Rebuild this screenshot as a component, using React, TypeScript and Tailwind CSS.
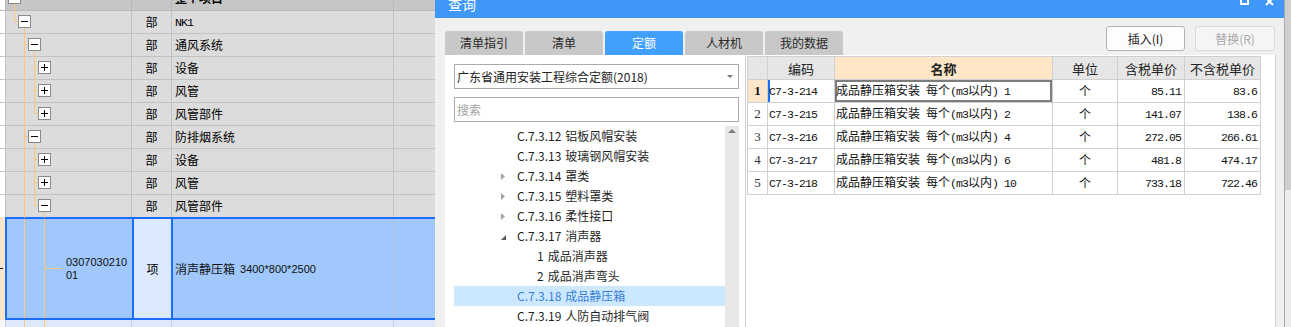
import React from "react";

const TL = "bg-[#fdc67c]";

type VKind = "full" | "upper" | "below";
const VX: Record<number, string> = { 8: "left-[8px]", 18: "left-[18px]", 28: "left-[28px]", 38: "left-[38px]" };
const VK: Record<VKind, string> = {
  full: "top-0 bottom-[-1px]",
  upper: "top-0 h-[11px]",
  below: "top-[17px] bottom-[-1px]",
};
const BX: Record<number, string> = { 12: "left-[12px]", 22: "left-[22px]", 32: "left-[32px]" };
const HX: Record<number, string> = { 12: "left-[8px]", 22: "left-[18px]", 32: "left-[28px]" };

function Sim({ text, bold }: { text: string; bold?: boolean }) {
  const parts = text.match(/[\x20-\x7e]+|[^\x20-\x7e]+/g) ?? [];
  return (
    <span className={`whitespace-pre leading-[14px] ${bold ? "font-bold" : ""}`}>
      {parts.map((p, i) =>
        /^[\x20-\x7e]/.test(p) ? (
          <span key={i} className="font-['Liberation_Mono',monospace] text-[11.5px] tracking-[-0.9px]">
            {p}
          </span>
        ) : (
          <span key={i} className="font-['Noto_Sans_CJK_SC',sans-serif] text-[12px]">
            {p}
          </span>
        )
      )}
    </span>
  );
}

function Box({ minus, cls }: { minus?: boolean; cls: string }) {
  return (
    <div className={`absolute w-[13px] h-[13px] border border-[#8a8a8a] bg-white ${cls}`}>
      <div className="absolute left-[2px] top-[5px] w-[7px] h-px bg-black" />
      {!minus && <div className="absolute left-[5px] top-[2px] w-px h-[7px] bg-black" />}
    </div>
  );
}

type RowSpec = { name: string; v: [number, VKind][]; box: [number, "plus" | "minus"]; last?: boolean };

const ROWS: RowSpec[] = [
  { name: "NK1", v: [[8, "upper"], [18, "below"]], box: [12, "minus"] },
  { name: "通风系统", v: [[18, "full"], [28, "below"]], box: [22, "minus"] },
  { name: "设备", v: [[18, "full"], [28, "full"]], box: [32, "plus"] },
  { name: "风管", v: [[18, "full"], [28, "full"]], box: [32, "plus"] },
  { name: "风管部件", v: [[18, "full"], [28, "upper"]], box: [32, "plus"] },
  { name: "防排烟系统", v: [[18, "full"], [28, "below"]], box: [22, "minus"] },
  { name: "设备", v: [[18, "full"], [28, "full"]], box: [32, "plus"] },
  { name: "风管", v: [[18, "full"], [28, "full"]], box: [32, "plus"] },
  { name: "风管部件", v: [[18, "full"], [28, "upper"], [38, "below"]], box: [32, "minus"], last: true },
];

function Row({ r }: { r: RowSpec }) {
  return (
    <div className={`flex shrink-0 ${r.last ? "h-[22px]" : "h-[23px] border-b border-[#c2c2c2]"}`}>
      <div className="w-[6px] border-r border-[#c2c2c2] bg-white" />
      <div className="relative w-[126px] border-r border-[#c2c2c2]">
        {r.v.map(([x, k], i) => (
          <div key={i} className={`absolute w-px ${TL} ${VX[x]} ${VK[k]}`} />
        ))}
        <div className={`absolute top-[10px] h-px w-[4px] ${TL} ${HX[r.box[0]]}`} />
        <Box minus={r.box[1] === "minus"} cls={`top-[4px] ${BX[r.box[0]]}`} />
      </div>
      <div className="w-[40px] border-r border-[#c2c2c2] flex items-center justify-center">
        <Sim text="部" />
      </div>
      <div className="w-[222px] border-r border-[#c2c2c2] flex items-center pl-[3px]">
        <Sim text={r.name} />
      </div>
      <div className="flex-1" />
    </div>
  );
}

function LeftTable() {
  return (
    <div className="w-[435px] shrink-0 flex flex-col bg-[#dcdcdc] text-black">
      <div className="flex shrink-0 h-[11px] border-b border-[#b9b9b9] bg-[#c6c6c6]">
        <div className="w-[6px] border-r border-[#b9b9b9] bg-white" />
        <div className="relative w-[126px] border-r border-[#b9b9b9]">
          <div className={`absolute w-px left-[8px] top-[4px] bottom-[-1px] ${TL}`} />
          <Box cls="top-[-9px] left-[2px]" minus />
        </div>
        <div className="w-[40px] border-r border-[#b9b9b9]" />
        <div className="w-[222px] border-r border-[#b9b9b9] pl-[3px]">
          <div className="mt-[-8px] leading-[12px] text-[12px] font-bold">整个项目</div>
        </div>
        <div className="flex-1" />
      </div>
      {ROWS.map((r, i) => (
        <Row key={i} r={r} />
      ))}
      {/* selected row */}
      <div className="flex shrink-0 h-[103px]">
        <div className="relative w-[5px] bg-[#fde6c8]">
          <div className="absolute left-0 top-[51px] w-[3px] h-px bg-black" />
        </div>
        <div className="flex flex-1 border-2 border-r-0 border-[#1a6dff] bg-[#a0c8fc]">
          <div className="relative w-[125px] flex items-center pl-[59px]">
            <div className={`absolute w-px left-[17px] top-0 bottom-0 ${TL}`} />
            <div className={`absolute w-px left-[37px] top-0 bottom-0 ${TL}`} />
            <div className={`absolute h-px left-[37px] w-[17px] top-[49px] ${TL}`} />
            <div className="font-['Liberation_Sans',sans-serif] text-[11px] leading-[13px] text-[#111]">
              0307030210
              <br />
              01
            </div>
          </div>
          <div className="w-[41px] border-x-2 border-[#1a6dff] bg-[#dce8fc] flex items-center justify-center text-[12px]">
            项
          </div>
          <div className="w-[221px] border-r border-[#b0c0d6] flex items-center pl-[2px] text-[#111]">
            <span className="text-[12px] leading-[14px]">消声静压箱</span>
            <span className="ml-[5px] font-['Liberation_Sans',sans-serif] text-[11px] leading-[14px]">
              3400*800*2500
            </span>
          </div>
          <div className="flex-1" />
        </div>
      </div>
      {/* row below */}
      <div className="flex shrink-0 h-[23px] bg-[#dde8fb]">
        <div className="w-[6px] border-r border-[#c4cedc] bg-[#f4f6fa]" />
        <div className="relative w-[126px] border-r border-[#c4cedc]">
          <div className={`absolute w-px left-[18px] top-0 bottom-0 ${TL}`} />
          <div className={`absolute w-px left-[38px] top-0 bottom-0 ${TL}`} />
        </div>
        <div className="w-[40px] border-r border-[#c4cedc]" />
        <div className="w-[222px] border-r border-[#c4cedc]" />
        <div className="flex-1" />
      </div>
    </div>
  );
}

type Item = { code: string; t: string; arrow?: "right" | "down"; child?: boolean; sel?: boolean };
const ITEMS: Item[] = [
  { code: "C.7.3.12", t: "铝板风帽安装" },
  { code: "C.7.3.13", t: "玻璃钢风帽安装" },
  { code: "C.7.3.14", t: "罩类", arrow: "right" },
  { code: "C.7.3.15", t: "塑料罩类", arrow: "right" },
  { code: "C.7.3.16", t: "柔性接口", arrow: "right" },
  { code: "C.7.3.17", t: "消声器", arrow: "down" },
  { code: "1", t: "成品消声器", child: true },
  { code: "2", t: "成品消声弯头", child: true },
  { code: "C.7.3.18", t: "成品静压箱", sel: true },
  { code: "C.7.3.19", t: "人防自动排气阀" },
];

function TreeItem({ it }: { it: Item }) {
  return (
    <div
      className={`h-[20px] shrink-0 flex items-center text-[12px] leading-[14px] ${
        it.sel ? "bg-[#cce8ff] text-[#3b7fd9]" : "text-[#1f1f1f]"
      } ${it.child ? "pl-[83px]" : "pl-[47px]"}`}
    >
      {!it.child && (
        <div className="w-[16px] h-[20px] flex items-center">
          {it.arrow === "right" && (
            <svg width="4" height="7" viewBox="0 0 4 7">
              <path d="M0 0L4 3.5L0 7Z" fill="#a3a3a3" />
            </svg>
          )}
          {it.arrow === "down" && (
            <svg width="5" height="5" viewBox="0 0 5 5" className="mt-[3px]">
              <path d="M5 0L5 5L0 5Z" fill="#5a5a5a" />
            </svg>
          )}
        </div>
      )}
      <span>{it.code}</span>
      <span className="ml-[4px]">{it.t}</span>
    </div>
  );
}

function LeftPanel() {
  return (
    <div className="w-[300px] shrink-0 flex flex-col pt-[9px] pl-[9px] pr-[6px]">
      <div className="h-[25px] shrink-0 border border-[#ababab] flex items-center pl-[2px] pr-[5px]">
        <span className="text-[12px] leading-[14px] text-[#222]">广东省通用安装工程综合定额(2018)</span>
        <svg className="ml-auto" width="6" height="3" viewBox="0 0 6 3">
          <path d="M0 0H6L3 3Z" fill="#777" />
        </svg>
      </div>
      <div className="mt-[8px] h-[25px] shrink-0 border border-[#ababab] flex items-center pl-[2px] text-[12px] leading-[14px] text-[#a3a3a3]">
        搜索
      </div>
      <div className="mt-[4px] flex flex-1">
        <div className="w-[271px] flex flex-col">
          {ITEMS.map((it, i) => (
            <TreeItem key={i} it={it} />
          ))}
        </div>
        <div className="w-[14px] bg-[#e8e8e8] flex justify-center pt-[3px]">
          <svg width="8" height="4" viewBox="0 0 8 4">
            <path d="M0 4L4 0L8 4Z" fill="#7f7f7f" />
          </svg>
        </div>
      </div>
    </div>
  );
}

type GRow = { n: number; code: string; name: string; a: string; b: string };
const GROWS: GRow[] = [
  { n: 1, code: "C7-3-214", name: "成品静压箱安装 每个(m3以内) 1", a: "85.11", b: "83.6" },
  { n: 2, code: "C7-3-215", name: "成品静压箱安装 每个(m3以内) 2", a: "141.07", b: "138.6" },
  { n: 3, code: "C7-3-216", name: "成品静压箱安装 每个(m3以内) 4", a: "272.05", b: "266.61" },
  { n: 4, code: "C7-3-217", name: "成品静压箱安装 每个(m3以内) 6", a: "481.8", b: "474.17" },
  { n: 5, code: "C7-3-218", name: "成品静压箱安装 每个(m3以内) 10", a: "733.18", b: "722.46" },
];

function GridPanel() {
  const hc = "h-full border-r border-[#d0d0d0] flex items-center justify-center text-[13px] leading-[15px] text-[#222]";
  const dc = "h-full border-r border-[#d0d0d0] flex items-center";
  return (
    <div className="flex-1 pl-[1px] pt-[1px]">
      <div className="w-[514px] border-l border-t border-[#d0d0d0]">
        <div className="flex h-[23px] border-b border-[#d0d0d0] bg-[#e6e6e6]">
          <div className={`w-[20px] ${hc}`} />
          <div className={`w-[67px] ${hc}`}>编码</div>
          <div className={`w-[218px] ${hc} bg-[#fee6c6] font-bold`}>名称</div>
          <div className={`w-[65px] ${hc}`}>单位</div>
          <div className={`w-[67px] ${hc}`}>含税单价</div>
          <div className={`w-[76px] ${hc}`}>不含税单价</div>
        </div>
        {GROWS.map((r) => {
          const first = r.n === 1;
          return (
            <div key={r.n} className="flex h-[23px] border-b border-[#d0d0d0] bg-white text-[#111]">
              <div
                className={`w-[20px] ${dc} justify-center font-['Liberation_Serif',serif] text-[13px] ${
                  first ? "bg-[#fde7cb] font-bold" : "text-[#333]"
                }`}
              >
                {r.n}
              </div>
              <div className={`w-[67px] ${dc} pl-[1px] ${first ? "shadow-[inset_2px_0_0_#1a6dff]" : ""}`}>
                <Sim text={r.code} />
              </div>
              <div className={`w-[218px] ${dc} pl-[1px] ${first ? "shadow-[inset_0_0_0_2px_#7c7c7c]" : ""}`}>
                <Sim text={r.name} />
              </div>
              <div className={`w-[65px] ${dc} justify-center`}>
                <Sim text="个" />
              </div>
              <div className={`w-[67px] ${dc} justify-end pr-[3px]`}>
                <Sim text={r.a} />
              </div>
              <div className={`w-[76px] ${dc} justify-end pr-[3px]`}>
                <Sim text={r.b} />
              </div>
            </div>
          );
        })}
      </div>
    </div>
  );
}

function Dialog() {
  const tabs = ["清单指引", "清单", "定额", "人材机", "我的数据"];
  return (
    <div className="w-[849px] shrink-0 flex flex-col bg-[#f0f0f0]">
      <div className="h-[18px] shrink-0 bg-[#3f98f7] overflow-hidden flex items-end">
        <span className="ml-[13px] mb-[7px] text-[14px] leading-[14px] text-white">查询</span>
        <div className="ml-auto mr-[10px] flex items-end gap-[16px]">
          <div className="w-[9px] h-[9px] border-2 border-white mb-[13px]" />
          <svg width="9" height="9" viewBox="0 0 9 9" className="mb-[12px]">
            <path d="M1 1L8 8M8 1L1 8" stroke="#fff" strokeWidth="2" />
          </svg>
        </div>
      </div>
      <div className="flex shrink-0 h-[37px] pl-[10px] pr-[9px]">
        <div className="flex gap-[2px] self-end">
          {tabs.map((t) => (
            <div
              key={t}
              className={`w-[78px] h-[24px] rounded-t-[3px] flex items-center justify-center text-[12px] leading-[14px] ${
                t === "定额" ? "bg-[#40a0fb] text-white" : "bg-[#c8c8c8] text-[#2a2a2a]"
              }`}
            >
              {t}
            </div>
          ))}
        </div>
        <div className="ml-auto flex gap-[10px] self-end mb-[4px]">
          <div className="w-[79px] h-[25px] rounded-[3px] border border-[#b3b3b3] bg-[#fdfdfd] flex items-center justify-center text-[12px] leading-[14px] text-[#222]">
            插入(I)
          </div>
          <div className="w-[80px] h-[25px] rounded-[3px] border border-[#dadada] bg-[#f5f5f5] flex items-center justify-center text-[12px] leading-[14px] text-[#a9a9a9]">
            替换(R)
          </div>
        </div>
      </div>
      <div className="flex flex-1 ml-[10px] w-[831px] bg-white border-r border-[#d4d4d4]">
        <LeftPanel />
        <div className="w-px bg-[#d0d0d0]" />
        <GridPanel />
      </div>
    </div>
  );
}

export default function App() {
  return (
    <div className="flex w-[1291px] h-[327px] overflow-hidden bg-white font-['Noto_Sans_CJK_SC',sans-serif] text-[12px] text-black">
      <LeftTable />
      <Dialog />
      <div className="w-[7px] shrink-0 flex flex-col border-l border-[#a9a9a9]">
        <div className="h-[190px] bg-[#cfcfcf]" />
        <div className="flex-1 bg-[#ebebeb]" />
      </div>
    </div>
  );
}
